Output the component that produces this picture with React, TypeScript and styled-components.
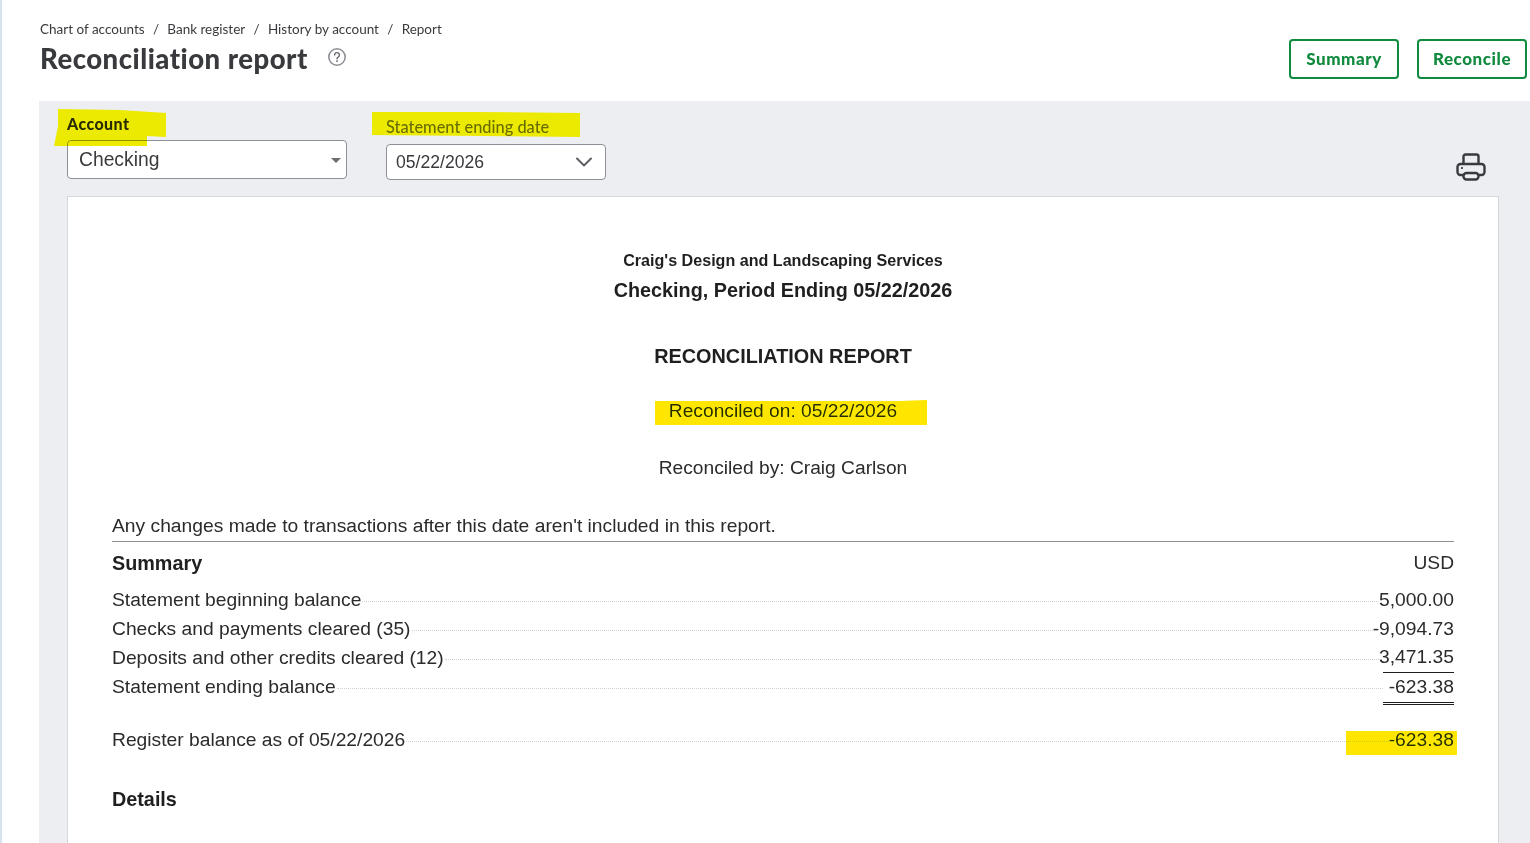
import React from "react";
import styled, { createGlobalStyle } from "styled-components";

const Global = createGlobalStyle`
  html, body { margin: 0; padding: 0; background: #fff; height: 100%; overflow: hidden; }
  * { box-sizing: border-box; }
`;

const uiFont = `Lato, "Noto Sans", sans-serif`;
const reportFont = `"Liberation Sans", Arial, sans-serif`;

const Page = styled.div`
  position: relative;
  width: 1530px;
  height: 843px;
  overflow: hidden;
  border-left: 2px solid #d6e2ec;
  display: flex;
  flex-direction: column;
  font-family: ${uiFont};
`;
const Header = styled.header`
  height: 101px;
  flex: none;
  display: flex;
  justify-content: space-between;
  padding: 21px 3px 0 38px;
`;
const Crumbs = styled.nav`
  display: flex;
  font-size: 13.5px;
  line-height: 17px;
  color: #393a3d;
`;
const Sep = styled.span`
  margin: 0 8.3px;
`;
const TitleRow = styled.div`
  display: flex;
  align-items: center;
  margin-top: 3px;
`;
const Title = styled.h1`
  margin: 0;
  font-size: 27.5px;
  line-height: 36px;
  font-weight: 900;
  letter-spacing: 0.5px;
  color: #393a3d;
`;
const HelpIcon = styled.svg`
  width: 20px;
  height: 20px;
  margin-left: 19px;
  margin-top: -4px;
`;
const Actions = styled.div`
  display: flex;
  gap: 18px;
  padding-top: 18px;
`;
const OutlineButton = styled.button<{ $w: number }>`
  width: ${(p) => p.$w}px;
  height: 40px;
  border: 2px solid #108a3e;
  border-radius: 4px;
  background: #fff;
  color: #108a3e;
  font-family: ${uiFont};
  font-size: 17px;
  line-height: 34px;
  font-weight: 900;
  letter-spacing: 0.55px;
  padding: 0 0 1px;
`;
const Panel = styled.main`
  flex: 1;
  margin-left: 37px;
  background: #eceef1;
  display: flex;
  flex-direction: column;
`;
const Controls = styled.div`
  height: 95px;
  flex: none;
  position: relative;
  display: flex;
  padding-left: 28px;
`;
const Field = styled.div<{ $w: number; $top: number; $mr: number }>`
  width: ${(p) => p.$w}px;
  margin-right: ${(p) => p.$mr}px;
  padding-top: ${(p) => p.$top}px;
`;
const FieldLabel = styled.div<{ $strong?: boolean; $h: number }>`
  font-size: ${(p) => (p.$strong ? "16px" : "16.4px")};
  font-weight: ${(p) => (p.$strong ? 900 : 500)};
  letter-spacing: ${(p) => (p.$strong ? "0.4px" : "0")};
  color: ${(p) => (p.$strong ? "#2b2b2b" : "#6b6c72")};
  height: ${(p) => p.$h}px;
  line-height: 20px;
`;
const SelectBox = styled.div<{ $h: number; $size: number; $pad: number }>`
  height: ${(p) => p.$h}px;
  background: #fff;
  border: 1px solid #8d9096;
  border-radius: 4px;
  display: flex;
  align-items: center;
  justify-content: space-between;
  padding: 0 ${(p) => (p.$pad > 10 ? 10 : 11)}px 0 ${(p) => p.$pad}px;
  font-family: ${reportFont};
  font-size: ${(p) => p.$size}px;
  color: #393a3d;
`;
const Caret = styled.span`
  width: 0;
  height: 0;
  border-left: 5px solid transparent;
  border-right: 5px solid transparent;
  border-top: 5px solid #6b6c72;
  margin-top: 2px;
  margin-right: -5px;
`;
const Chevron = styled.svg`
  width: 20px;
  height: 12px;
`;
const PrintIcon = styled.svg`
  position: absolute;
  left: 1416px;
  top: 50px;
  width: 32px;
  height: 32px;
`;
const Sheet = styled.section`
  flex: 1;
  margin: 0 28px 0 28px;
  width: 1432px;
  background: #fff;
  border: 1px solid #d4d7dc;
  border-bottom: none;
  padding: 0 44px;
  font-family: ${reportFont};
  color: #2b2b2b;
`;
const CenterLine = styled.div<{ $mt: number; $size?: number; $bold?: boolean }>`
  margin-top: ${(p) => p.$mt}px;
  text-align: center;
  font-size: ${(p) => p.$size ?? 19.2}px;
  line-height: 22px;
  font-weight: ${(p) => (p.$bold ? 700 : 400)};
  color: ${(p) => (p.$bold ? "#1f1f1f" : "#2b2b2b")};
`;
const Note = styled.div`
  margin-top: 36px;
  font-size: 19.25px;
  line-height: 22px;
  padding-bottom: 4px;
  border-bottom: 1px solid #8d9096;
`;
const SectionRow = styled.div`
  display: flex;
  justify-content: space-between;
  font-size: 19.2px;
  line-height: 22px;
  margin-top: 10px;
  margin-bottom: 11px;
`;
const Strong = styled.strong`
  font-size: 19.8px;
  font-weight: 700;
  color: #1f1f1f;
`;
const Row = styled.div<{ $mt?: number }>`
  display: flex;
  align-items: center;
  height: 29px;
  font-size: 19.25px;
  margin-top: ${(p) => p.$mt ?? 0}px;
`;
const Leader = styled.span`
  flex: 1;
  border-bottom: 1px dotted #d0d2d5;
  margin: 3px 0 0 1px;
`;
const Amount = styled.span<{ $line?: "top" | "double" }>`
  position: relative;
  height: 100%;
  display: flex;
  align-items: center;
  justify-content: flex-end;
  white-space: nowrap;
  ${(p) => (p.$line ? "width: 71px;" : "")}
  ${(p) => (p.$line === "top" ? "margin-left: 4px; border-bottom: 1px solid #1f1f1f; height: 30px; margin-bottom: -1px; padding-bottom: 1px;" : "")}
  ${(p) => (p.$line === "double" ? "border-bottom: 3px double #1f1f1f; height: 33px; margin-bottom: -4px;" : "")}
`;
const PlainAmount = styled.span``;
const Details = styled(Strong)`
  display: block;
  margin-top: 33px;
  line-height: 24px;
`;
const Marker = styled.svg`
  position: absolute;
  left: 0;
  top: 0;
  width: 1530px;
  height: 843px;
  pointer-events: none;
  mix-blend-mode: darken;
`;

const rows = [
  { label: "Statement beginning balance", value: "5,000.00" },
  { label: "Checks and payments cleared (35)", value: "-9,094.73" },
  { label: "Deposits and other credits cleared (12)", value: "3,471.35", line: "top" as const },
  { label: "Statement ending balance", value: "-623.38", line: "double" as const },
];

export default function App() {
  return (
    <>
      <Global />
      <Page>
        <Header>
          <div>
            <Crumbs>
              <span>Chart of accounts</span>
              <Sep>/</Sep>
              <span>Bank register</span>
              <Sep>/</Sep>
              <span>History by account</span>
              <Sep>/</Sep>
              <span>Report</span>
            </Crumbs>
            <TitleRow>
              <Title>Reconciliation report</Title>
              <HelpIcon viewBox="0 0 20 20" fill="none">
                <circle cx="10" cy="10" r="8.2" stroke="#8d9096" strokeWidth="1.6" />
                <path d="M7.6 8a2.4 2.4 0 1 1 3.6 2.1c-.8.5-1.2 1-1.2 1.8" stroke="#6b6c72" strokeWidth="1.4" strokeLinecap="round" />
                <circle cx="10" cy="14.2" r="0.9" fill="#6b6c72" />
              </HelpIcon>
            </TitleRow>
          </div>
          <Actions>
            <OutlineButton $w={110}>Summary</OutlineButton>
            <OutlineButton $w={110}>Reconcile</OutlineButton>
          </Actions>
        </Header>
        <Panel>
          <Controls>
            <Field $w={280} $mr={39} $top={13}>
              <FieldLabel $strong $h={26}>Account</FieldLabel>
              <SelectBox $h={39} $size={19.3} $pad={11}>
                Checking
                <Caret />
              </SelectBox>
            </Field>
            <Field $w={220} $mr={0} $top={16}>
              <FieldLabel $h={27}>Statement ending date</FieldLabel>
              <SelectBox $h={36} $size={17.6} $pad={9}>
                05/22/2026
                <Chevron viewBox="0 0 20 12" fill="none">
                  <path d="M3 2.5l7 7 7-7" stroke="#5f6065" strokeWidth="2" strokeLinecap="round" strokeLinejoin="round" />
                </Chevron>
              </SelectBox>
            </Field>
            <PrintIcon viewBox="0 0 32 32" fill="none" stroke="#393a3d" strokeWidth="2.4" strokeLinejoin="round">
              <path d="M8.5 13V5.5a2 2 0 0 1 2-2h11a2 2 0 0 1 2 2V13" />
              <path d="M8 24H5.5a3 3 0 0 1-3-3v-5a3 3 0 0 1 3-3h21a3 3 0 0 1 3 3v5a3 3 0 0 1-3 3H24" />
              <rect x="8.5" y="22" width="15" height="6.5" rx="3" />
              <circle cx="7" cy="17" r="0.7" fill="#393a3d" strokeWidth="1" />
            </PrintIcon>
          </Controls>
          <Sheet>
            <CenterLine $mt={52} $size={16.1} $bold>Craig's Design and Landscaping Services</CenterLine>
            <CenterLine $mt={8} $size={19.8} $bold>Checking, Period Ending 05/22/2026</CenterLine>
            <CenterLine $mt={44} $size={19.85} $bold>RECONCILIATION REPORT</CenterLine>
            <CenterLine $mt={33}>Reconciled on: 05/22/2026</CenterLine>
            <CenterLine $mt={35}>Reconciled by: Craig Carlson</CenterLine>
            <Note>Any changes made to transactions after this date aren't included in this report.</Note>
            <SectionRow>
              <Strong>Summary</Strong>
              <span>USD</span>
            </SectionRow>
            {rows.map((r) => (
              <Row key={r.label}>
                <span>{r.label}</span>
                <Leader />
                <Amount $line={r.line}>{r.value}</Amount>
              </Row>
            ))}
            <Row $mt={24}>
              <span>Register balance as of 05/22/2026</span>
              <Leader />
              <PlainAmount>-623.38</PlainAmount>
            </Row>
            <Details>Details</Details>
          </Sheet>
        </Panel>
        <Marker viewBox="0 0 1530 843">
          <g transform="translate(-2 0)">
            <path d="M58 109L120 110L166 113V137L147 136V146H54L58 126Z" fill="#f0ea00" />
            <path d="M372 112L470 112L580 113V137L372 135Z" fill="#f0ea00" />
            <path d="M655 401H900L927 400V425H655Z" fill="#ffe600" />
            <path d="M1346 731H1457V755H1346Z" fill="#ffe600" />
          </g>
        </Marker>
      </Page>
    </>
  );
}
